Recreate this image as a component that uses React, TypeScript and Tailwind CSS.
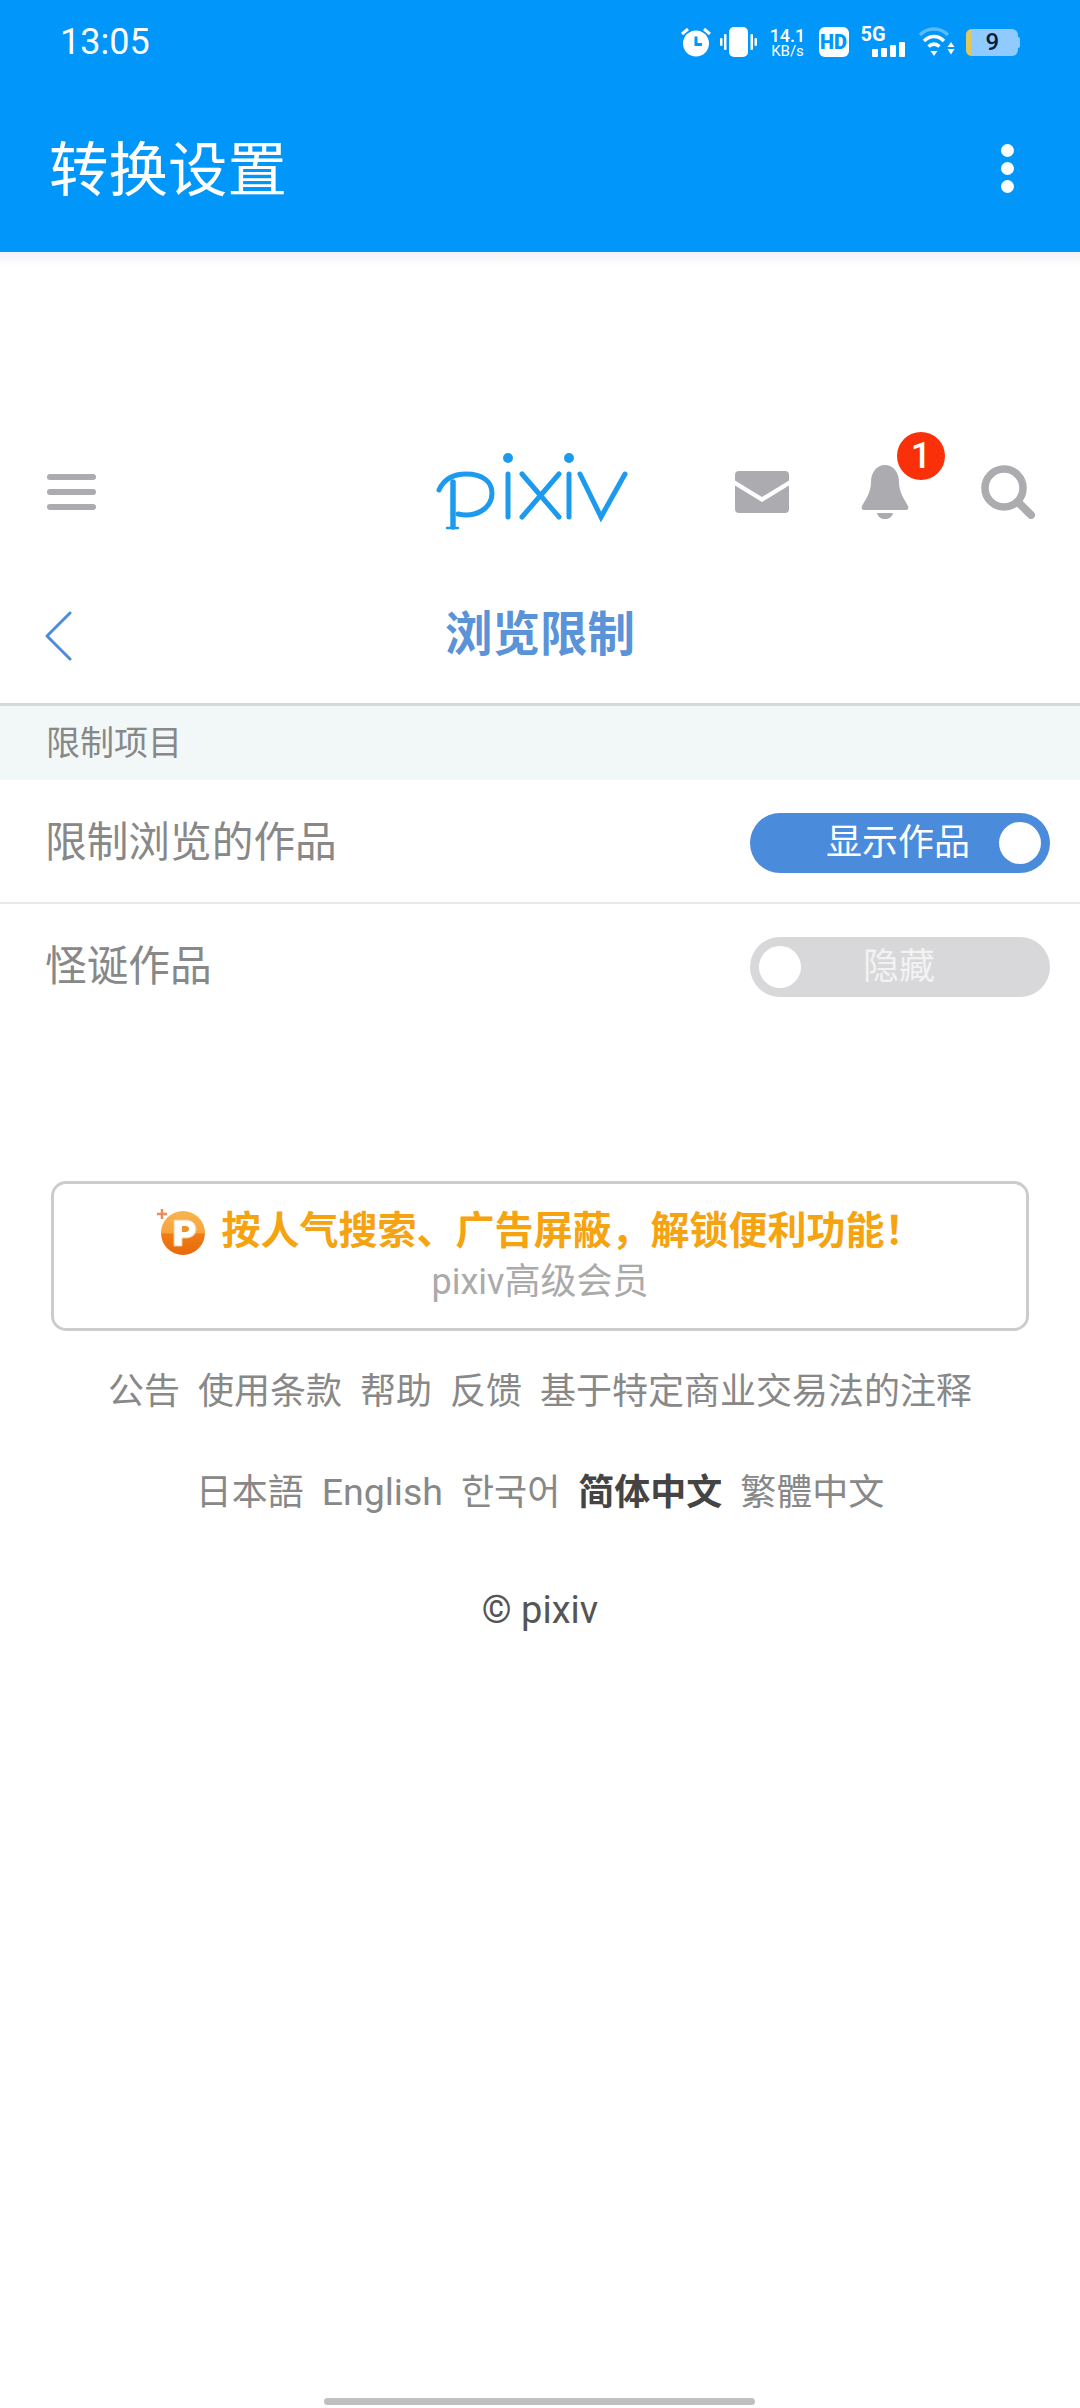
import React from "react";

const cjk = "font-['Roboto','Noto_Sans_CJK_SC','Noto_Sans_CJK_KR',sans-serif]";

function StatusBar() {
  return (
    <div className="flex h-[84px] items-center pl-[60px] pr-[60px] text-white">
      <span className="text-[36px] leading-none">13:05</span>
      <div className="ml-auto flex items-center">
        {/* alarm */}
        <svg width="30" height="30" viewBox="0 0 30 30" fill="none">
          <circle cx="15" cy="16.5" r="13" fill="#fff" />
          <path d="M15 9.5v8h6" stroke="#0096fa" strokeWidth="3" />
          <path d="M1 7l6-5M29 7l-6-5" stroke="#fff" strokeWidth="3" />
        </svg>
        {/* vibrate */}
        <svg className="ml-[9px]" width="37" height="30" viewBox="0 0 37 30" fill="#fff">
          <rect x="9" y="0" width="19" height="30" rx="5" />
          <rect x="0" y="11" width="2.5" height="8" rx="1" />
          <rect x="4" y="7" width="2.5" height="16" rx="1" />
          <rect x="30.5" y="7" width="2.5" height="16" rx="1" />
          <rect x="34.5" y="11" width="2.5" height="8" rx="1" />
        </svg>
        {/* speed */}
        <div className="ml-[13px] flex w-[36px] flex-col items-center font-['Roboto',sans-serif]">
          <span className="text-[18px] font-medium leading-[17px]">14.1</span>
          <span className="text-[15px] leading-[14px]">KB/s</span>
        </div>
        {/* HD */}
        <div className="ml-[13px] flex h-[30px] w-[30px] items-center justify-center rounded-[6px] bg-white font-['Roboto',sans-serif] text-[20px] font-black leading-none text-[#0096fa]">
          HD
        </div>
        {/* 5G and signal */}
        <div className="relative ml-[12px] h-[30px] w-[44px]">
          <span className="absolute left-0 top-[-3px] font-['Roboto',sans-serif] text-[20px] font-bold leading-[20px]">5G</span>
          <div className="absolute bottom-0 right-0 flex items-end gap-[3px]">
            <div className="h-[8px] w-[6px] rounded-[1px] bg-white" />
            <div className="h-[9px] w-[6px] rounded-[1px] bg-white" />
            <div className="h-[12px] w-[6px] rounded-[1px] bg-white" />
            <div className="h-[15px] w-[6px] rounded-[1px] bg-white" />
          </div>
        </div>
        {/* wifi */}
        <svg className="ml-[13px]" width="37" height="30" viewBox="0 0 37 30" fill="none">
          <path d="M2 8C10 0 22 0 30 8" stroke="#fff" strokeOpacity="0.35" strokeWidth="3.5" />
          <path d="M6 14C12 8 20 8 26 14" stroke="#fff" strokeWidth="3.5" />
          <path d="M10.5 19.5C14 16.5 18 16.5 21.5 19.5" stroke="#fff" strokeWidth="3.5" />
          <path d="M12.5 24h7l-3.5 5z" fill="#fff" />
          <path d="M33 15l3.5 5h-7zM29.5 22h7L33 27.5z" fill="#fff" />
        </svg>
        {/* battery */}
        <div className="relative ml-[11px] flex h-[27px] w-[52px] items-center overflow-hidden rounded-[6px] bg-[#8fcbff]">
          <div className="h-full w-[5px] bg-[#e3c75a]" />
          <span className="ml-[15px] font-['Roboto',sans-serif] text-[24px] font-medium leading-none text-[#0a1a3a]">9</span>
        </div>
        <div className="h-[11px] w-[2.5px] rounded-r-[2px] bg-[#8fcbff]" />
      </div>
    </div>
  );
}

function AppBar() {
  return (
    <header className="h-[252px] bg-[#0096fa]">
      <StatusBar />
      <div className="flex h-[168px] items-center justify-between pl-[49px] pr-[66px]">
        <h1 className="pt-[6px] text-[59.5px] leading-[84px] text-white">转换设置</h1>
        <div className="flex flex-col gap-[5px]">
          <div className="h-[13px] w-[13px] rounded-full bg-white" />
          <div className="h-[13px] w-[13px] rounded-full bg-white" />
          <div className="h-[13px] w-[13px] rounded-full bg-white" />
        </div>
      </div>
    </header>
  );
}

function PixivNav() {
  return (
    <nav className="flex h-[100px] items-center pl-[47px]">
      <div className="mt-[4px] flex w-[49px] flex-col gap-[9px]">
        <div className="h-[6px] rounded-full bg-[#acacb0]" />
        <div className="h-[6px] rounded-full bg-[#acacb0]" />
        <div className="h-[6px] rounded-full bg-[#acacb0]" />
      </div>
      {/* logo */}
      <svg className="ml-[324px]" width="230" height="100" viewBox="0 0 230 100" fill="none" stroke="#1c9bee" strokeWidth="5" strokeLinecap="round">
        <path d="M19 50C24 39 33 34 46 34C63 34 72 42 72 53C72 69 55 78 38 74" />
        <path d="M33 42V87" strokeWidth="5.5" />
        <path d="M27 88H38" strokeWidth="2.5" />
        <circle cx="88" cy="18" r="5" fill="#1c9bee" stroke="none" />
        <path d="M88 34V77" />
        <path d="M102 34L139 77M139 34L102 77" />
        <circle cx="149" cy="18" r="5" fill="#1c9bee" stroke="none" />
        <path d="M149 34V77" />
        <path d="M160 34L181 77L205 34" />
      </svg>
      {/* mail */}
      <svg className="ml-[85px] mt-[4px]" width="54" height="42" viewBox="0 0 54 42" fill="#acacb0">
        <path d="M0 9.5V4a4 4 0 0 1 4-4h46a4 4 0 0 1 4 4v5.5L27 26z" />
        <path d="M0 14.5L27 31 54 14.5V38a4 4 0 0 1-4 4H4a4 4 0 0 1-4-4z" />
      </svg>
      {/* bell */}
      <div className="relative ml-[72px] mt-[4px] h-[54px] w-[48px]">
        <svg width="48" height="54" viewBox="0 0 48 54" fill="#acacb0">
          <path d="M24 0C33 0 38 8 38 17C38 28 44 35 47 41C48 44 47 45 44 45H4C1 45 0 44 1 41C4 35 10 28 10 17C10 8 15 0 24 0z" />
          <path d="M16 48H32C31 52 28 54 24 54C20 54 17 52 16 48z" />
        </svg>
        <div className="absolute left-[36px] top-[-33px] flex h-[48px] w-[48px] items-center justify-center rounded-full bg-[#f9300a] font-['Roboto',sans-serif] text-[36px] font-medium leading-none text-white">
          1
        </div>
      </div>
      {/* search */}
      <svg className="ml-[72px] mt-[4px]" width="54" height="54" viewBox="0 0 54 54" fill="none" stroke="#acacb0" strokeLinecap="round">
        <circle cx="23" cy="23" r="19" strokeWidth="7.5" />
        <path d="M37 37L50 50" strokeWidth="8" />
      </svg>
    </nav>
  );
}

function SectionTitle() {
  return (
    <div className="grid h-[163px] grid-cols-[1fr_auto_1fr] items-center px-[45px] pt-[28px]">
      <svg width="27" height="50" viewBox="0 0 27 50" fill="none" stroke="#4a8bdc" strokeWidth="3" strokeLinecap="round" strokeLinejoin="round">
        <path d="M25 2L2 25L25 48" />
      </svg>
      <h2 className="text-[47.5px] font-bold leading-none text-[#5a93d8]">浏览限制</h2>
      <div />
    </div>
  );
}

function Toggle({ on, label }: { on: boolean; label: string }) {
  return (
    <div className={on ? "flex h-[60px] w-[300px] items-center justify-end rounded-full bg-[#4a8bdc] pr-[9px]" : "flex h-[60px] w-[300px] items-center rounded-full bg-[#d8d8da] pl-[9px]"}>
      {!on && <div className="h-[42px] w-[42px] rounded-full bg-white" />}
      <span className={on ? "mr-[29px] text-[36px] leading-none text-white" : "ml-[62px] text-[36px] leading-none text-[#f2f2f2]"}>{label}</span>
      {on && <div className="h-[42px] w-[42px] rounded-full bg-white" />}
    </div>
  );
}

function PremiumIcon() {
  return (
    <svg width="50" height="48" viewBox="0 0 50 48">
      <defs>
        <linearGradient id="coin" x1="0" y1="0" x2="0" y2="1">
          <stop offset="0" stopColor="#f9b44e" />
          <stop offset="0.5" stopColor="#f7a43a" />
          <stop offset="0.52" stopColor="#ef7d14" />
          <stop offset="1" stopColor="#e8690c" />
        </linearGradient>
      </defs>
      <path d="M6 2v10M1 7h10" stroke="#f08a5a" strokeWidth="2.5" />
      <circle cx="27" cy="26" r="22" fill="url(#coin)" />
      <path d="M18 13h12c6 0 10 3.5 10 9s-4 9-10 9h-4v8h-8z" fill="#fff" stroke="#f7c9a0" strokeWidth="1" />
      <path d="M26 19v6h3.5c2 0 3.5-1 3.5-3s-1.5-3-3.5-3z" fill="#f0902a" />
    </svg>
  );
}

const footerLinks = ["公告", "使用条款", "帮助", "反馈", "基于特定商业交易法的注释"];

function App() {
  return (
    <div className={`relative h-[2408px] w-[1080px] overflow-hidden bg-white ${cjk}`}>
      <AppBar />
      <div className="h-[188px] bg-linear-to-b from-[#f1f1f6] via-white via-[14px] to-white" />
      <PixivNav />
      <SectionTitle />

      <div className="flex h-[77px] items-center border-t-[3px] border-[#d5d9dc] bg-[#f2f7f8] pl-[46px]">
        <span className="text-[34px] leading-none text-[#888888]">限制项目</span>
      </div>
      <div className="flex h-[124px] items-center justify-between border-b-[2px] border-[#e8e8ea] pl-[45px] pr-[30px] pt-[4px]">
        <span className="text-[41.7px] leading-none text-[#888888]">限制浏览的作品</span>
        <Toggle on label="显示作品" />
      </div>
      <div className="flex h-[124px] items-center justify-between pl-[45px] pr-[30px] pt-[2px]">
        <span className="text-[41.7px] leading-none text-[#888888]">怪诞作品</span>
        <Toggle on={false} label="隐藏" />
      </div>

      <div className="mx-[51px] mt-[153px] flex h-[150px] w-[978px] flex-col items-center rounded-[15px] border-[3px] border-[#cccccc] pt-[23px]">
        <div className="flex items-center">
          <PremiumIcon />
          <span className="ml-[15px] text-[39px] font-bold leading-[48px] text-[#f5a310]">按人气搜索、广告屏蔽，解锁便利功能！</span>
        </div>
        <span className="mt-[4px] text-[36px] leading-[46px] text-[#aaaaaa]">pixiv高级会员</span>
      </div>

      <div className="mt-[37px] flex h-[48px] items-center justify-center gap-[18px] text-[36px] leading-none text-[#888888]">
        {footerLinks.map((l) => (
          <span key={l}>{l}</span>
        ))}
      </div>
      <div className="mt-[53px] flex h-[48px] items-center justify-center gap-[18px] text-[36px] leading-none text-[#888888]">
        <span>日本語</span>
        <span className="text-[37.5px]">English</span>
        <span>한국어</span>
        <span className="font-bold text-[#444444]">简体中文</span>
        <span>繁體中文</span>
      </div>
      <div className="mt-[69px] text-center text-[38px] leading-[48px] text-[#555555]">© pixiv</div>

      <div className="absolute bottom-[3px] left-[324px] h-[7px] w-[431px] rounded-full bg-[#c0c0c0]" />
    </div>
  );
}

export default App;
